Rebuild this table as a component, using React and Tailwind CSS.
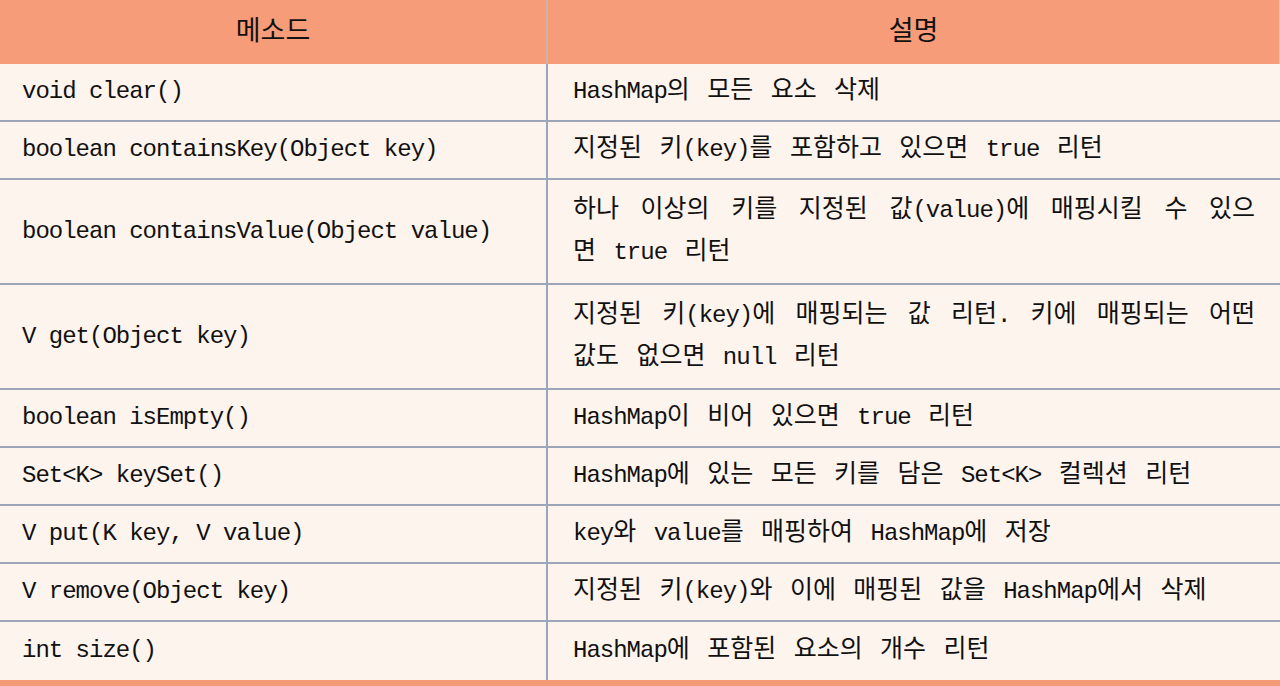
const rows = [
  { method: 'void clear()', desc: ['HashMap의 모든 요소 삭제'] },
  { method: 'boolean containsKey(Object key)', desc: ['지정된 키(key)를 포함하고 있으면 true 리턴'] },
  {
    method: 'boolean containsValue(Object value)',
    desc: ['하나 이상의 키를 지정된 값(value)에 매핑시킬 수 있으', '면 true 리턴'],
  },
  {
    method: 'V get(Object key)',
    desc: ['지정된 키(key)에 매핑되는 값 리턴. 키에 매핑되는 어떤', '값도 없으면 null 리턴'],
  },
  { method: 'boolean isEmpty()', desc: ['HashMap이 비어 있으면 true 리턴'] },
  { method: 'Set<K> keySet()', desc: ['HashMap에 있는 모든 키를 담은 Set<K> 컬렉션 리턴'] },
  { method: 'V put(K key, V value)', desc: ['key와 value를 매핑하여 HashMap에 저장'] },
  { method: 'V remove(Object key)', desc: ['지정된 키(key)와 이에 매핑된 값을 HashMap에서 삭제'] },
  { method: 'int size()', desc: ['HashMap에 포함된 요소의 개수 리턴'] },
]

// hangul runs get a slightly bigger size, like the original mixed font
function Mixed({ text }) {
  return text.split(/([\uAC00-\uD7A3]+)/).map((part, i) =>
    /[\uAC00-\uD7A3]/.test(part) ? (
      <span key={i} className="text-[25px] tracking-normal">
        {part}
      </span>
    ) : (
      <span key={i}>{part}</span>
    )
  )
}

function Row({ row, last }) {
  const tall = row.desc.length > 1
  return (
    <div
      className={
        'flex ' +
        (tall ? 'h-[105px] ' : 'h-[58px] ') +
        (last ? 'border-b-[6px] border-[#f59a76] h-[64px]' : 'border-b-2 border-[#9ba6b8]')
      }
    >
      <div className="w-[548px] shrink-0 border-r-2 border-[#9ba6b8] flex items-center pl-[22px]">
        <span className="whitespace-pre">{row.method}</span>
      </div>
      <div className="flex-1 flex flex-col justify-center pl-[25px] pr-[25px] [word-spacing:4px]">
        {row.desc.map((line, i) => (
          <div
            key={i}
            className={
              'whitespace-nowrap leading-[42px] ' +
              (tall && i === 0 ? 'text-justify [text-align-last:justify] [word-spacing:0px]' : '')
            }
          >
            <Mixed text={line} />
          </div>
        ))}
      </div>
    </div>
  )
}

export default function App() {
  return (
    <div
      className="w-[1280px] h-[686px] bg-[#fef4ee] text-[#111111] text-[24px] tracking-[-1px] overflow-hidden"
      style={{ fontFamily: '"Liberation Mono", "Noto Sans CJK KR", monospace' }}
    >
      <div className="flex h-[64px] bg-[#f69c78] text-[27px] tracking-normal">
        <div className="w-[548px] shrink-0 flex items-center justify-center border-r-2 border-[#c9b3ad] pt-[2px]">
          메소드
        </div>
        <div className="flex-1 flex items-center justify-center border-r border-[#f2c4b0] pt-[2px]">설명</div>
      </div>
      {rows.map((row, i) => (
        <Row key={i} row={row} last={i === rows.length - 1} />
      ))}
    </div>
  )
}
